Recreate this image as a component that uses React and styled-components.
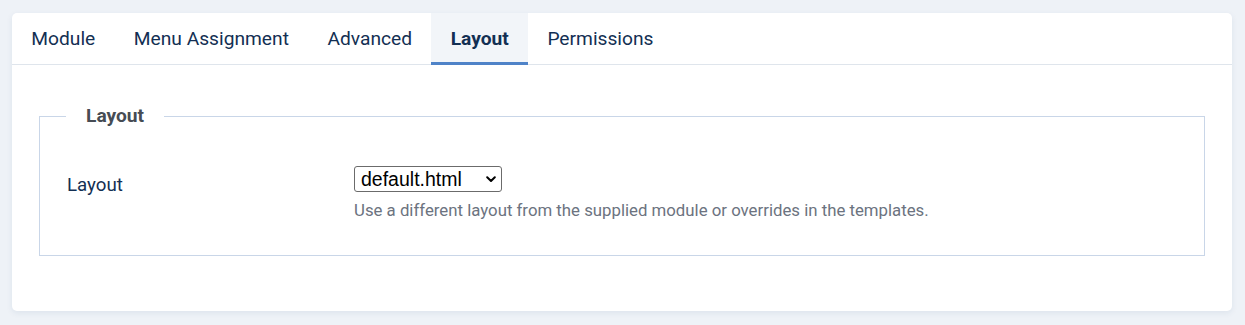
import styled, { createGlobalStyle } from "styled-components";

const GlobalStyle = createGlobalStyle`
  html, body {
    margin: 0;
    padding: 0;
    background: #eef2f7;
    font-family: Roboto, "Noto Sans", Arial, sans-serif;
  }
`;

const Page = styled.div`
  padding: 13px 13px 15px 12px;
`;

const Card = styled.div`
  background: #fff;
  border-radius: 5px;
  box-shadow: 0 2px 6px rgba(30, 60, 110, 0.08);
  overflow: hidden;
`;

const TabBar = styled.div`
  display: flex;
  border-bottom: 1px solid #dfe5ec;
`;

const Tab = styled.div`
  padding: 12px 19.3px 10px;
  font-size: 19.2px;
  line-height: 27px;
  color: #132f53;
  font-weight: ${(p) => (p.$active ? 700 : 400)};
  background: ${(p) => (p.$active ? "#f2f5f9" : "transparent")};
  border-bottom: 3px solid ${(p) => (p.$active ? "#4f83c8" : "transparent")};
  margin-bottom: -1px;
  cursor: pointer;
`;

const Body = styled.div`
  padding: 39px 27px 55px;
`;

const Fieldset = styled.fieldset`
  margin: 0;
  padding: 38px 27px 34px;
  border: 1px solid #c9d6e8;
  min-width: 0;
`;

const Legend = styled.legend`
  margin-left: -1px;
  padding: 0 20px;
  font-size: 19.2px;
  font-weight: 700;
  color: #464c54;
  line-height: 24px;
`;

const Row = styled.div`
  display: flex;
  align-items: flex-start;
`;

const Label = styled.label`
  width: 287px;
  flex: none;
  font-size: 18.7px;
  color: #132f53;
  line-height: 27px;
  padding-top: 6px;
`;

const Controls = styled.div`
  display: flex;
  flex-direction: column;
  align-items: flex-start;
  gap: 7px;
`;

const SelectWrap = styled.div`
  position: relative;
  width: 148px;
  height: 26px;
`;

const Select = styled.select`
  appearance: none;
  width: 100%;
  height: 100%;
  box-sizing: border-box;
  border: 1px solid #6b6b6b;
  border-radius: 3px;
  background: #fff;
  padding: 0 0 0 6px;
  font-family: Arial, "Liberation Sans", sans-serif;
  font-size: 19.5px;
  color: #000;
`;

const Chevron = styled.svg`
  position: absolute;
  right: 6px;
  top: 10px;
  pointer-events: none;
`;

const Help = styled.div`
  font-size: 16.8px;
  color: #6c7380;
  line-height: 22px;
`;

const tabs = ["Module", "Menu Assignment", "Advanced", "Layout", "Permissions"];

export default function App() {
  return (
    <Page>
      <GlobalStyle />
      <Card>
        <TabBar>
          {tabs.map((t) => (
            <Tab key={t} $active={t === "Layout"}>
              {t}
            </Tab>
          ))}
        </TabBar>
        <Body>
          <Fieldset>
            <Legend>Layout</Legend>
            <Row>
              <Label>Layout</Label>
              <Controls>
                <SelectWrap>
                  <Select defaultValue="default">
                    <option value="default">default.html</option>
                  </Select>
                  <Chevron width="10" height="7" viewBox="0 0 10 7">
                    <path
                      d="M1.2 1.2 L5 5 L8.8 1.2"
                      fill="none"
                      stroke="#000"
                      strokeWidth="2"
                      strokeLinecap="round"
                      strokeLinejoin="round"
                    />
                  </Chevron>
                </SelectWrap>
                <Help>
                  Use a different layout from the supplied module or overrides
                  in the templates.
                </Help>
              </Controls>
            </Row>
          </Fieldset>
        </Body>
      </Card>
    </Page>
  );
}
